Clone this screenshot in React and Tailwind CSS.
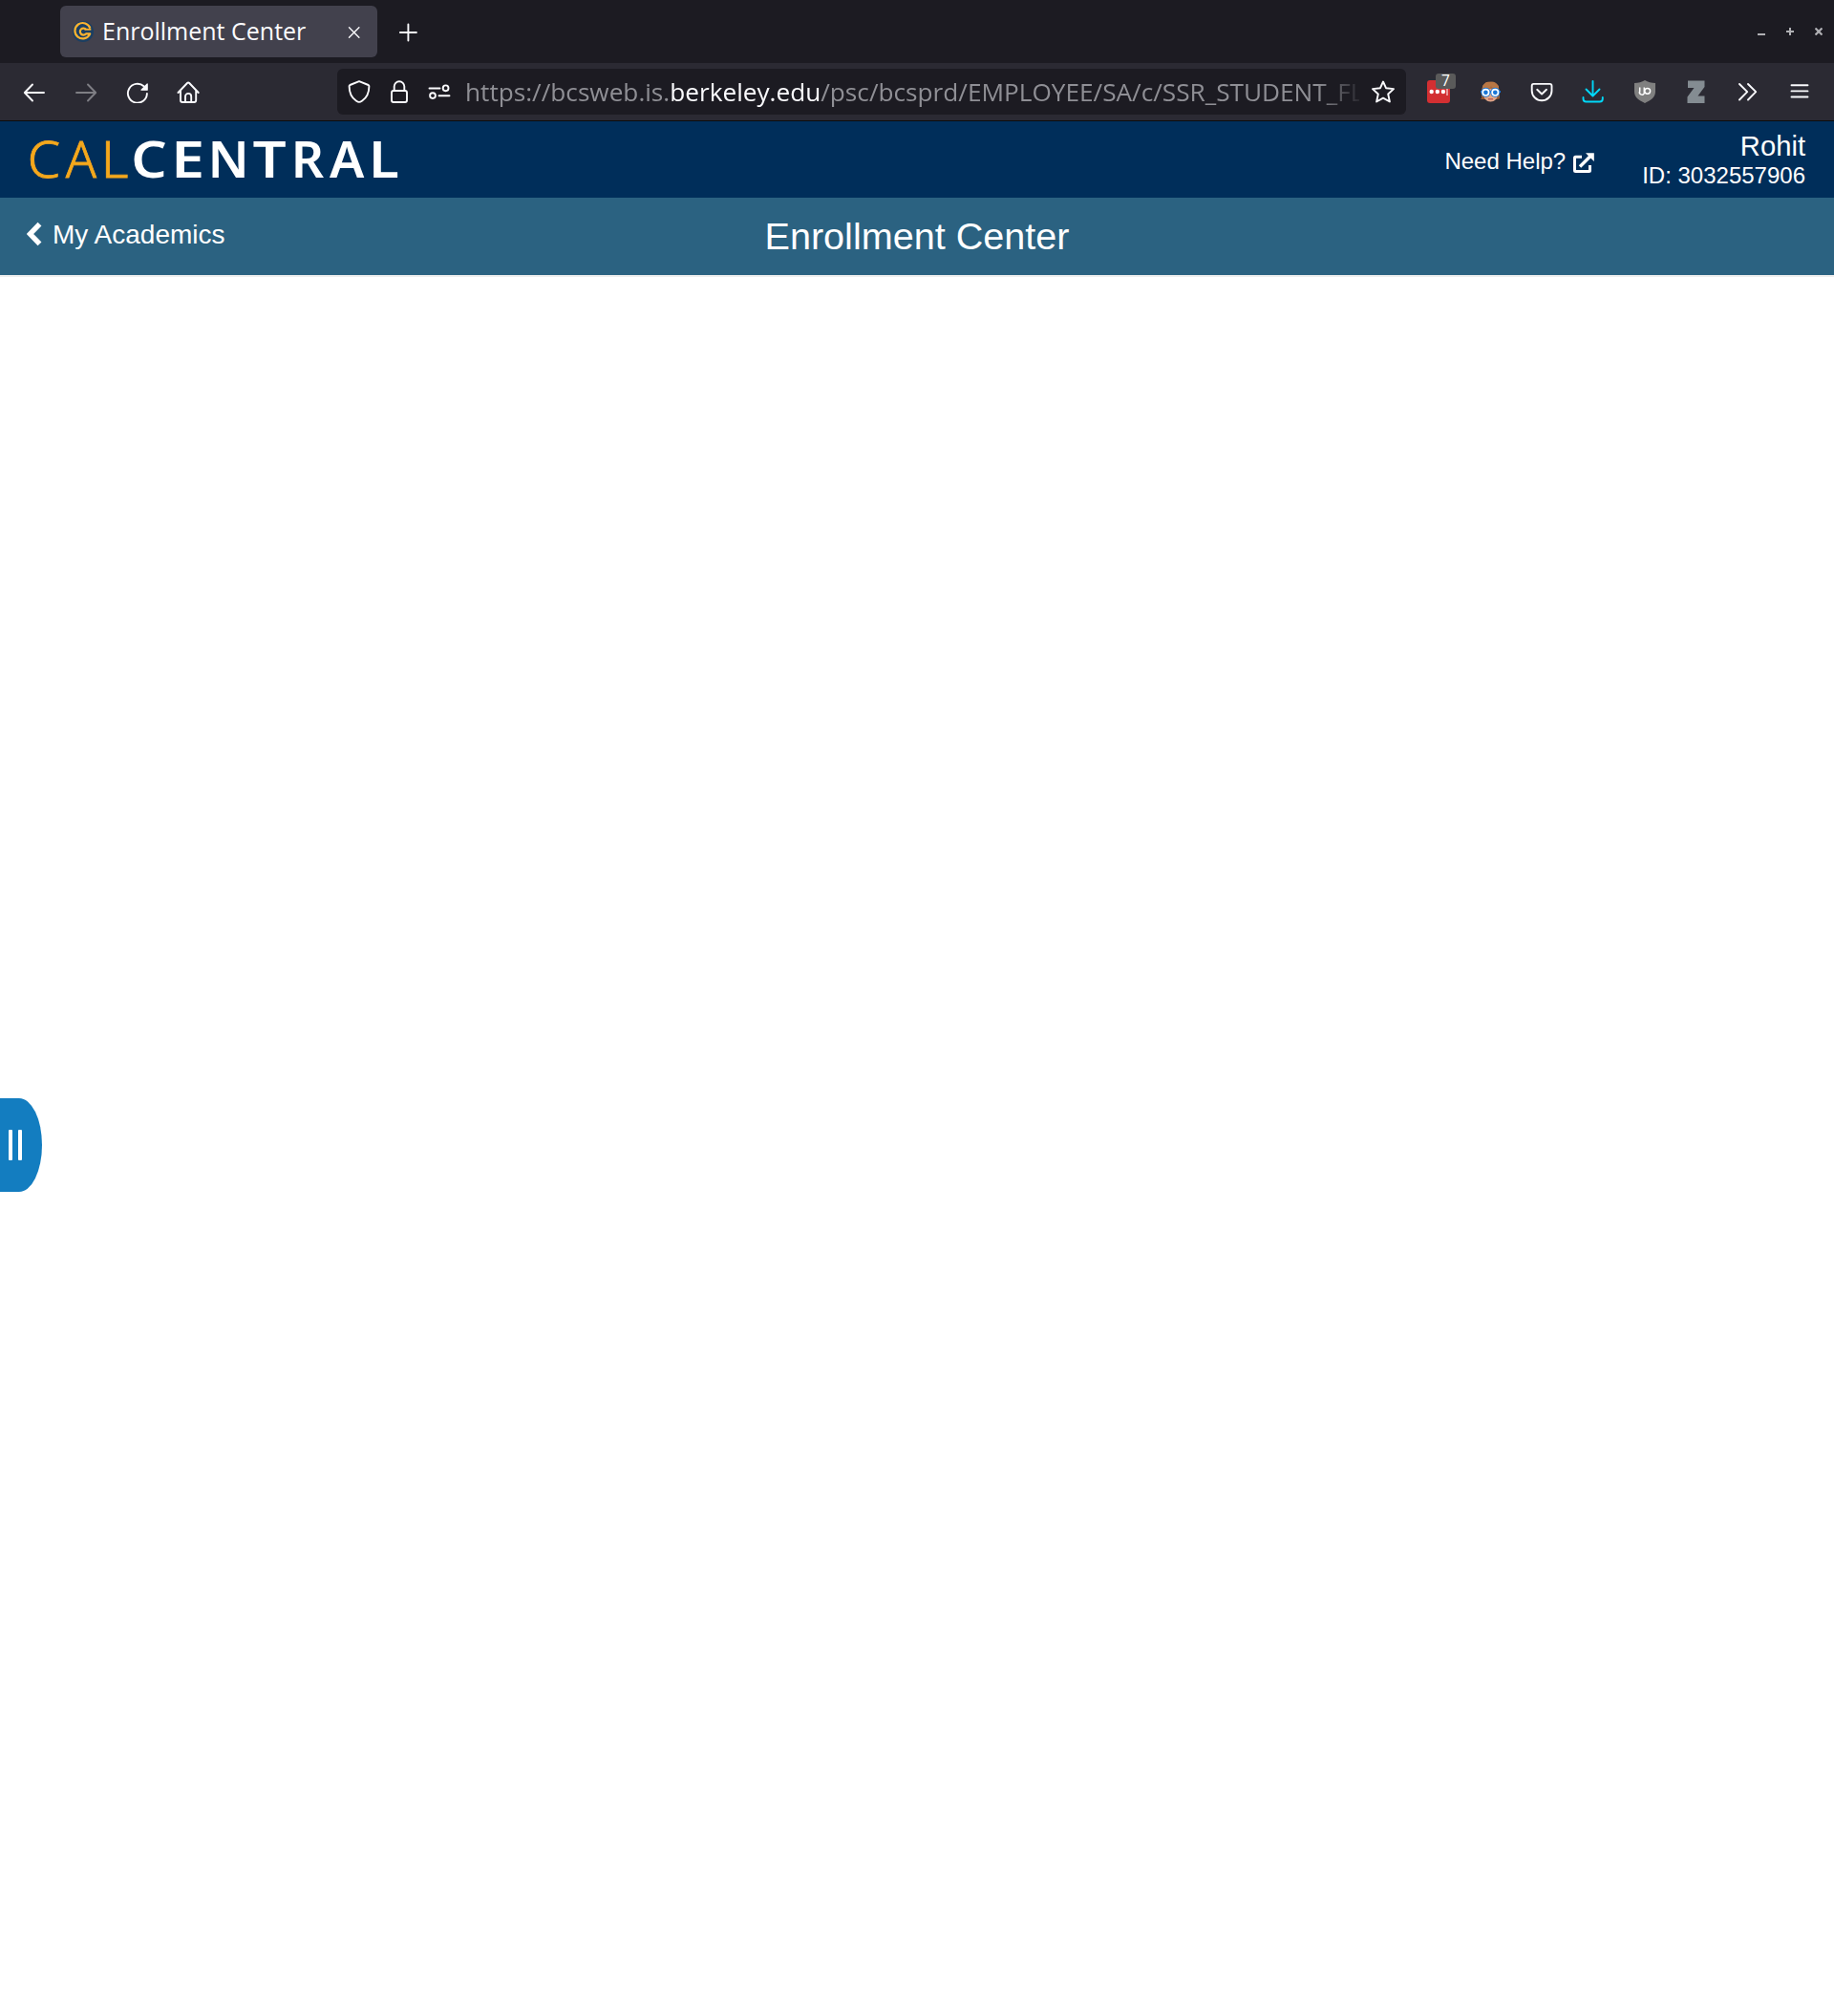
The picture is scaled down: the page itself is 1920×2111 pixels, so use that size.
import React from "react";

function Icon({ children, className = "", label }) {
  return (
    <svg
      width="24"
      height="24"
      viewBox="0 0 24 24"
      fill="none"
      stroke="#fbfbfe"
      strokeWidth="1.9"
      strokeLinecap="round"
      strokeLinejoin="round"
      aria-label={label}
      className={"block shrink-0 " + className}
    >
      {children}
    </svg>
  );
}

function ToolButton({ children }) {
  return <button className="flex h-[60px] w-[54px] shrink-0 items-center justify-center">{children}</button>;
}

function TabBar() {
  return (
    <div className="flex h-[66px] items-center bg-[#1c1b22] pl-[63px]">
      <div className="flex h-[54px] w-[332px] items-center rounded-[6px] bg-[#42414d] pr-[17px] pl-[13px]">
        <svg width="22" height="22" viewBox="0 0 22 22" fill="none" className="shrink-0">
          <circle cx="11" cy="11" r="11" fill="#1b3f63" />
          <g stroke="#fdb32f" strokeWidth="2.200" strokeLinejoin="round">
            <path d="M14 8.800a3.500 3.500 0 1 0 0 4.600H18.200A8.200 8.200 0 1 1 18.400 7.600" />
            <path d="M12.500 8.800H19.300" strokeWidth="1.800" />
          </g>
        </svg>
        <span className="mb-[2px] ml-[9px] flex-1 text-[25px] leading-[34px] whitespace-nowrap text-[#fbfbfe]">Enrollment Center</span>
        <svg width="14" height="14" viewBox="0 0 14 14" stroke="#fbfbfe" strokeWidth="1.4" strokeLinecap="round" className="mt-[1px]">
          <path d="M1.500 1.800 11.900 12.200M11.900 1.800 1.500 12.200" />
        </svg>
      </div>
      <svg width="20" height="20" viewBox="0 0 20 20" stroke="#fbfbfe" strokeWidth="1.9" strokeLinecap="round" className="mt-[1px] ml-[22px]">
        <path d="M10.400 1.500v17M1.900 10h17" />
      </svg>
      <div className="ml-auto flex items-center pr-3">
        <svg width="8" height="8" viewBox="0 0 8 8" fill="#b0b0b4" className="mr-[22px]"><path d="M0 6h8v2H0z" /></svg>
        <svg width="8" height="8" viewBox="0 0 8 8" fill="#b0b0b4" className="mr-[22px]"><path d="M3 0h2v3h3v2H5v3H3V5H0V3h3z" /></svg>
        <svg width="8" height="8" viewBox="0 0 8 8" stroke="#b0b0b4" strokeWidth="2.2"><path d="M.5.5l7 7M7.500.5l-7 7" /></svg>
      </div>
    </div>
  );
}

function AddressBar() {
  return (
    <div className="flex h-12 w-[1119px] items-center rounded-[6px] bg-[#1c1b22] pr-[11px] pl-[11px]">
      <Icon label="Tracking protection">
        <path d="M12 1.2 21.600 5c.6.3.8.6.8 1.2 0 6-1.9 11.600-7.200 15.300-1.200.8-2.200 1.400-3.200 1.400s-2-.6-3.200-1.400C3.500 17.800 1.600 12.200 1.600 6.200c0-.6.2-.9.800-1.200z" />
      </Icon>
      <Icon label="Secure" className="ml-[18px]">
        <rect x="4" y="11" width="16" height="12" rx="2" />
        <path d="M6.700 11V6.600a5.300 5.300 0 0 1 10.600 0V11" />
      </Icon>
      <Icon label="Permissions" className="ml-[18px]">
        <path d="M1.500 8.500h11M11.500 16.300h11" />
        <circle cx="18.600" cy="8.300" r="2.900" />
        <circle cx="5" cy="16.100" r="2.900" />
      </Icon>
      <div className="ml-[15px] w-[936px] overflow-hidden text-[26.200px] leading-[36px] whitespace-nowrap text-[#8f8f95] [mask-image:linear-gradient(to_right,black_892px,transparent_942px)]">
        https://bcsweb.is.<span className="text-[#fbfbfe]">berkeley.edu</span>/psc/bcsprd/EMPLOYEE/SA/c/SSR_STUDENT_FL
      </div>
      <Icon label="Bookmark" className="ml-[13px]">
        <path d="M12 1.500 15 8.200 23 9.100 17.200 14.500 18.900 22.500 12 18.700 5.100 22.500 6.800 14.500 1 9.100 9 8.200z" />
      </Icon>
    </div>
  );
}

function Toolbar() {
  return (
    <div className="flex h-[61px] items-center border-b border-[#0c0c0d] bg-[#2b2a33] px-[9px]">
      <ToolButton>
        <Icon label="Back"><path d="M22 13H2M10 4.500 1.800 13 10 21.500" /></Icon>
      </ToolButton>
      <ToolButton>
        <Icon label="Forward" className="opacity-40"><path d="M2 13h20M14 4.500 22.200 13 14 21.500" /></Icon>
      </ToolButton>
      <ToolButton>
        <Icon label="Reload">
          <path d="M21.900 14A10 10 0 1 1 18.600 6.300" />
          <path d="M22.200 4v6.200h-6.200z" fill="#fbfbfe" strokeWidth="1.200" />
        </Icon>
      </ToolButton>
      <ToolButton>
        <Icon label="Home" className="mr-[2px]">
          <path d="M1.500 13 11 3a1.500 1.500 0 0 1 2.200 0L22.700 13M4 11v10a2 2 0 0 0 2 2h12.200a2 2 0 0 0 2-2V11M9 22.500V17a3 3 0 0 1 6.200 0v5.500" />
        </Icon>
      </ToolButton>
      <div className="ml-[128px]">
        <AddressBar />
      </div>
      <div className="ml-[7px] flex">
        <ToolButton>
          <span className="relative flex h-6 w-6 items-center justify-center rounded-[3px] bg-[#d32f32]">
            <svg width="24" height="24" viewBox="0 0 24 24" fill="#fff">
              <circle cx="4.700" cy="12" r="2.200" />
              <circle cx="10.800" cy="12" r="2.200" />
              <circle cx="16.900" cy="12" r="2.200" />
              <path d="M20.500 8h1v8h-1z" />
            </svg>
            <span className="absolute -top-[7px] left-[9px] flex h-4 w-[21px] items-center justify-center rounded-[3px] bg-[#5a5a5a] text-[15.500px] leading-none text-white">7</span>
          </span>
        </ToolButton>
        <ToolButton>
          <svg width="24" height="24" viewBox="0 0 24 24">
            <path d="M3 20C3 8 3 1.500 12.500 1.500S21.500 9 22 18.500l-3 1.500H3z" fill="#a86b42" />
            <path d="M1.500 20c2-1 3-4 3-8h15c0 4 1 6 2.500 7.500l-4 .5z" fill="#8c532f" />
            <path d="M5 9h15v6c0 4-3.500 7.500-7.500 7.500S5 19 5 15z" fill="#dfa588" />
            <path d="M4 10c5 0 8-2 9-4 1 2 4 4 8 4V6l-5-4H8L4 6z" fill="#b87745" />
            <path d="M2 12h21" stroke="#1976d8" strokeWidth="2" />
            <circle cx="7.400" cy="12.800" r="5" fill="#1976d8" />
            <circle cx="17.300" cy="12.800" r="5" fill="#1976d8" />
            <circle cx="7.400" cy="12.800" r="3.200" fill="#1976d8" stroke="#fff" strokeWidth="1.700" />
            <circle cx="17.300" cy="12.800" r="3.200" fill="#1976d8" stroke="#fff" strokeWidth="1.700" />
            <path d="M10 19.800h5" stroke="#b4524b" strokeWidth="1.200" />
          </svg>
        </ToolButton>
        <ToolButton>
          <Icon label="Pocket"><path d="M3.500 3.900h17a2 2 0 0 1 2 2v5a10.300 10.300 0 0 1-20.800 0v-5a2 2 0 0 1 1.800-2zM7.200 9.800l4.900 4.700L17 9.800" /></Icon>
        </ToolButton>
        <ToolButton>
          <Icon label="Downloads"><path d="M11.500 1v15M4.500 9.500l7 7 7-7M1.500 18v1.500a3 3 0 0 0 3 3h14.300a3 3 0 0 0 3-3V18" stroke="#00d8f8" /></Icon>
        </ToolButton>
        <ToolButton>
          <svg width="24" height="24" viewBox="0 0 24 24" fill="none">
            <path d="M12 0c3 2 7 3 11 3v9c0 6-5 9-11 12C6 21 1 18 1 12V3c4 0 8-1 11-3z" fill="#808080" />
            <path d="M6.700 7.500v4a2.300 2.300 0 0 0 4.600 2.200V7.500" stroke="#fff" strokeWidth="1.500" />
            <circle cx="14.700" cy="11.300" r="2.900" stroke="#fff" strokeWidth="1.500" />
          </svg>
        </ToolButton>
        <ToolButton>
          <svg width="24" height="24" viewBox="0 0 24 24" fill="#848c92">
            <path d="M3 .5h17.500v6.500L13.500 16.500h7V24H2.500v-6.500L9.500 8H3z" />
          </svg>
        </ToolButton>
        <ToolButton>
          <Icon label="More tools"><path d="M3 4l8.200 8.200L3 20.500M12 4l8.200 8.200L12 20.500" /></Icon>
        </ToolButton>
        <ToolButton>
          <Icon label="Menu"><path d="M3.500 5.300h17M3.500 11.400h17M3.500 17.500h17" /></Icon>
        </ToolButton>
      </div>
    </div>
  );
}

const LIGHT = [
  ["C", 4.700, 1.05],
  ["A", 44.800, 1.01],
  ["L", 81.700, 1.06],
];

const BOLD = [
  ["C", 113.200, 1.12],
  ["E", 154.900, 1.2],
  ["N", 193.600, 1.04],
  ["T", 240.500, 1.18],
  ["R", 280.700, 1.02],
  ["A", 321.000, 1.03],
  ["L", 362.000, 1.11],
];

function Logo() {
  return (
    <svg
      width="400"
      height="80"
      viewBox="0 0 400 80"
      className="ml-[24px] shrink-0"
      fontFamily="'Noto Sans', 'Open Sans', sans-serif"
      fontSize="52.500"
      aria-label="CalCentral"
    >
      <g fontWeight="300" fill="#f5a81c" stroke="#f5a81c" strokeWidth="0.8">
        {LIGHT.map(([ch, x, s]) => (
          <text key={x} transform={`translate(${x} 59) scale(${s} 1)`}>{ch}</text>
        ))}
      </g>
      <g fontWeight="600" fill="#fff">
        {BOLD.map(([ch, x, s]) => (
          <text key={x} transform={`translate(${x} 59) scale(${s} 1)`}>{ch}</text>
        ))}
      </g>
    </svg>
  );
}

function SiteHeader() {
  return (
    <header className="flex h-20 items-center bg-[#002e5a] pr-[30px] text-white">
      <Logo />
      <a className="mt-1 ml-auto flex items-center text-[24px] leading-7">
        Need Help?
        <svg width="22" height="22" viewBox="0 0 22 22" fill="none" stroke="#fff" strokeWidth="3" className="mt-[4px] ml-[8px]">
          <path d="M9 4.200H2.500a1 1 0 0 0-1 1V18.500a1 1 0 0 0 1 1h14a1 1 0 0 0 1-1V13" strokeLinejoin="round" />
          <path d="M7 14.500 18 3.500" strokeWidth="3.400" />
          <path d="M13 .3H21.800V9z" fill="#fff" stroke="none" />
        </svg>
      </a>
      <div className="mt-[3px] ml-[50px] text-right">
        <div className="text-[29.200px] leading-[31px]">Rohit</div>
        <div className="text-[24px] leading-[30px]">ID: 3032557906</div>
      </div>
    </header>
  );
}

function TitleBar() {
  return (
    <nav className="grid h-[83px] grid-cols-[1fr_auto_1fr] items-center border-b-2 border-[#eeeeee] bg-[#2b6281] px-[28px] text-white">
      <a className="mb-[5px] flex items-center text-[28px] leading-8">
        <svg width="16" height="26" viewBox="0 0 16 26" fill="none" stroke="#fff" strokeWidth="5.400">
          <path d="M13.500 2.600 3.500 13l10 10.400" />
        </svg>
        <span className="mt-[2px] ml-[11px]">My Academics</span>
      </a>
      <h1 className="mb-[2px] text-[39.600px] leading-[46px]">Enrollment Center</h1>
      <span />
    </nav>
  );
}

export default function App() {
  return (
    <div className="flex h-[2111px] w-[1920px] flex-col overflow-hidden bg-white">
      <div className="font-['Open_Sans','Noto_Sans',sans-serif]">
        <TabBar />
        <Toolbar />
      </div>
      <div className="flex flex-1 flex-col font-['Liberation_Sans',Arial,sans-serif]">
        <SiteHeader />
        <TitleBar />
        <main className="flex-1 pt-[860px]">
          <button className="flex h-[98px] w-11 items-center gap-[6px] rounded-r-[24px_49px] bg-[#137dc0] pl-[9px]" aria-label="Open panel">
            <span className="h-8 w-1 rounded-[1px] bg-white" />
            <span className="h-8 w-1 rounded-[1px] bg-white" />
          </button>
        </main>
      </div>
    </div>
  );
}
